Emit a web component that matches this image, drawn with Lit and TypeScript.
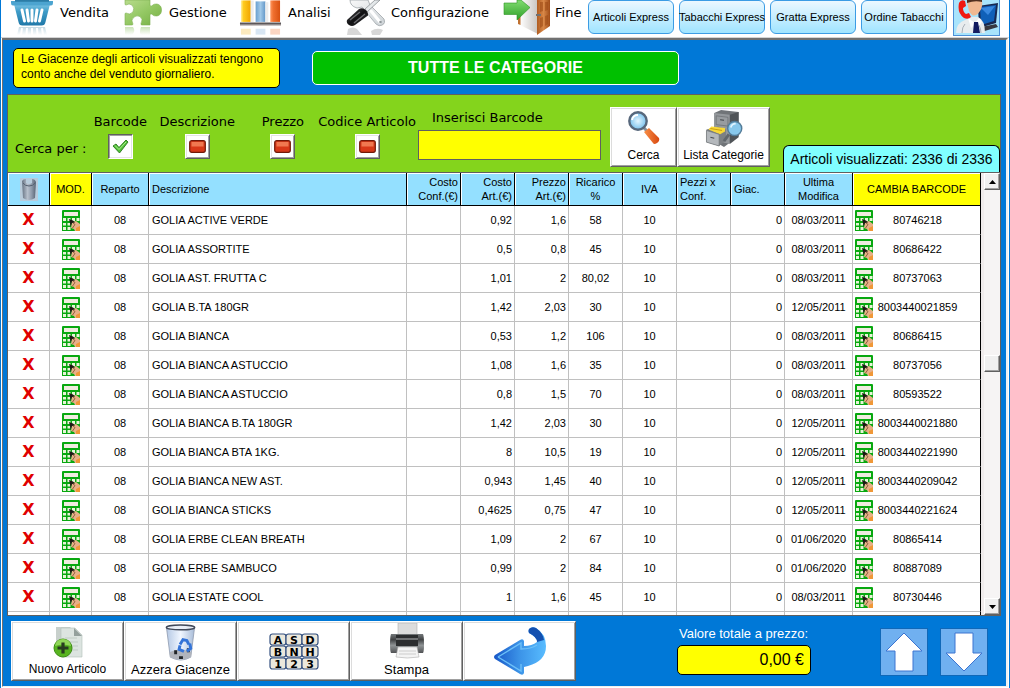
import { LitElement, html, css, svg } from "lit";
import { customElement, state } from "lit/decorators.js";

type Row = [string, string, string, string, string, string, string];

// descrizione, costo art., prezzo art., ricarico, giacenza, ultima modifica, barcode
const ROWS: Row[] = [
  ["GOLIA ACTIVE VERDE", "0,92", "1,6", "58", "0", "08/03/2011", "80746218"],
  ["GOLIA ASSORTITE", "0,5", "0,8", "45", "0", "08/03/2011", "80686422"],
  ["GOLIA AST. FRUTTA C", "1,01", "2", "80,02", "0", "08/03/2011", "80737063"],
  ["GOLIA B.TA 180GR", "1,42", "2,03", "30", "0", "12/05/2011", "8003440021859"],
  ["GOLIA BIANCA", "0,53", "1,2", "106", "0", "08/03/2011", "80686415"],
  ["GOLIA BIANCA ASTUCCIO", "1,08", "1,6", "35", "0", "08/03/2011", "80737056"],
  ["GOLIA BIANCA ASTUCCIO", "0,8", "1,5", "70", "0", "08/03/2011", "80593522"],
  ["GOLIA BIANCA B.TA 180GR", "1,42", "2,03", "30", "0", "12/05/2011", "8003440021880"],
  ["GOLIA BIANCA BTA 1KG.", "8", "10,5", "19", "0", "12/05/2011", "8003440221990"],
  ["GOLIA BIANCA NEW AST.", "0,943", "1,45", "40", "0", "12/05/2011", "8003440209042"],
  ["GOLIA BIANCA STICKS", "0,4625", "0,75", "47", "0", "12/05/2011", "8003440221624"],
  ["GOLIA ERBE CLEAN BREATH", "1,09", "2", "67", "0", "01/06/2020", "80865414"],
  ["GOLIA ERBE SAMBUCO", "0,99", "2", "84", "0", "01/06/2020", "80887089"],
  ["GOLIA ESTATE COOL", "1", "1,6", "45", "0", "08/03/2011", "80730446"],
];

const basket = html`<svg width="44" height="36" viewBox="0 0 44 36" aria-hidden="true">
  <defs>
    <linearGradient id="bk" x1="0" y1="0" x2="0" y2="1"><stop offset="0" stop-color="#7cc4e4"/><stop offset=".35" stop-color="#3f9cc8"/><stop offset="1" stop-color="#1f78a8"/></linearGradient>
    <linearGradient id="bkr" x1="0" y1="0" x2="0" y2="1"><stop offset="0" stop-color="#8ab4c8"/><stop offset="1" stop-color="#fff"/></linearGradient>
  </defs>
  <path d="M4 4h36l-4.500 18q-.6 3.500-4 3.500H12.500q-3.400 0-4-3.500z" fill="url(#bk)"/>
  <path d="M1 1h42v2q0 2.500-2 2.500H3Q1 5.500 1 3z" fill="#4ca4d0"/>
  <path d="M5 0h34v1.800H5z" fill="#2b7ca6"/>
  <path d="M12 10l2.500 11M17 10l1.500 11M22 10v11M27 10l-1.500 11M32 10l-2.500 11" stroke="#fff" stroke-width="3" stroke-linecap="round"/>
  <path d="M9 27h26l2 8H7z" fill="url(#bkr)" opacity=".5"/>
  <path d="M12 28l-1 7M17 28l-.5 7M22 28v7M27 28l.5 7M32 28l1 7" stroke="#fff" stroke-width="2"/>
</svg>`;

const puzzle = html`<svg width="40" height="36" viewBox="0 0 40 36" aria-hidden="true">
  <defs>
    <linearGradient id="pz" x1="0" y1="0" x2="1" y2="1"><stop offset="0" stop-color="#b8dc8c"/><stop offset=".5" stop-color="#94c864"/><stop offset="1" stop-color="#74ae42"/></linearGradient>
    <linearGradient id="pzr" x1="0" y1="0" x2="0" y2="1"><stop offset="0" stop-color="#a8d088"/><stop offset="1" stop-color="#fff"/></linearGradient>
  </defs>
  <path d="M2 0h25v5q0 1.500 1.500 1 2.500-2.500 5.500-2 4.500 1 4.500 6t-4.500 6q-3 .5-5.500-2-1.500-.5-1.500 1v10H19q-1.500 0-1-1.500 2.500-4.500-1-7-3-1.500-6 .5-3.500 3-1.200 6.500.4 1.500-.8 1.500H2V14q0-1 1-1 4 2.500 7-1 2-4-1-7-3-2-6 0-1 0-1-1z" fill="url(#pz)" stroke="#7cb050" stroke-width=".6"/>
  <path d="M2 27h8q3 4-1 8H2zM18 27h9v8h-9q-2-3 0-8z" fill="url(#pzr)" opacity=".6"/>
</svg>`;

const chart = html`<svg width="43" height="36" viewBox="0 0 44 36" aria-hidden="true">
  <defs>
    <linearGradient id="cy"><stop offset="0" stop-color="#fff0a0"/><stop offset=".25" stop-color="#ffcc20"/><stop offset="1" stop-color="#f0a400"/></linearGradient>
    <linearGradient id="cb"><stop offset="0" stop-color="#6aa0d0"/><stop offset=".5" stop-color="#a0c8e8"/><stop offset="1" stop-color="#6498c8"/></linearGradient>
    <linearGradient id="co"><stop offset="0" stop-color="#ff9860"/><stop offset=".3" stop-color="#f07030"/><stop offset="1" stop-color="#d85010"/></linearGradient>
  </defs>
  <path d="M2 0h10v22H2z" fill="url(#cy)"/><path d="M17 1h10v21H17z" fill="url(#cb)"/><path d="M32 0h10v22H32z" fill="url(#co)"/>
  <path d="M12 0h3v22h-3zM27 2h3v20h-3z" fill="#ececec"/>
  <path d="M1 22.500h42v2.500H1z" fill="#5c5658"/><path d="M1 25h42v1H1z" fill="#b8b0b0"/>
  <g opacity=".3"><path d="M2 29h10v6H2z" fill="#f4bc30"/><path d="M17 29h10v6H17z" fill="#80b0d8"/><path d="M32 29h10v6H32z" fill="#f07838"/></g>
</svg>`;

const tools = html`<svg width="39" height="36" viewBox="0 0 39 36" aria-hidden="true">
  <defs>
    <linearGradient id="tl" x1="0" y1="0" x2="1" y2="1"><stop offset="0" stop-color="#f8f8f8"/><stop offset="1" stop-color="#ccd2d6"/></linearGradient>
    <linearGradient id="th" x1="0" y1="0" x2="1" y2="1"><stop offset="0" stop-color="#505052"/><stop offset=".5" stop-color="#101012"/><stop offset="1" stop-color="#38383a"/></linearGradient>
  </defs>
  <path d="M4 0q0 6 7 8l5-1 14 17q3 3 6.500 1t1.500-6L24 5l-2-5z" fill="url(#tl)" stroke="#a0a6aa" stroke-width=".8"/>
  <path d="M25 11l9 11" stroke="#fff" stroke-width="3" stroke-linecap="round"/>
  <circle cx="34.500" cy="22" r="1.300" fill="#90989c"/>
  <path d="M29 0L19 9l2 3L34 0z" fill="#e4e8ea" stroke="#8c9094" stroke-width=".8"/>
  <path d="M13 9q3-1.500 6 .5 3.500 2.500 3 6L9 25q-3 2-6 0t-2-5z" fill="url(#th)"/>
  <path d="M14 12L4 20M19 14L8 23" stroke="#6c6c70" stroke-width="1.300"/>
  <path d="M2 29q5-3 9 0l5 6H1zM25 31q6-4 12-1l-3 5h-8z" fill="#8c8c8c" opacity=".35"/>
</svg>`;

const door = html`<svg width="48" height="36" viewBox="0 0 48 36" aria-hidden="true">
  <defs>
    <linearGradient id="dr"><stop offset="0" stop-color="#b05c20"/><stop offset=".5" stop-color="#d88848"/><stop offset="1" stop-color="#a04c18"/></linearGradient>
    <linearGradient id="da" x1="0" y1="0" x2="0" y2="1"><stop offset="0" stop-color="#80dc70"/><stop offset="1" stop-color="#30a028"/></linearGradient>
    <linearGradient id="dw"><stop offset="0" stop-color="#fff"/><stop offset="1" stop-color="#c8c4c0"/></linearGradient>
  </defs>
  <path d="M17 0h18v34L17 25z" fill="url(#dw)"/><path d="M15 0h2.500v25L15 24z" fill="#c07030"/>
  <path d="M34 0l13 0v26L34 35z" fill="url(#dr)"/>
  <path d="M37 2l3 0v9l-3 1zM42 2l3 0v8l-3 1zM37 18l3-1v9l-3 2zM42 16l3-1v9l-3 2z" fill="#9a4814" opacity=".55"/>
  <path d="M33 14h5v2h-5z" fill="#707070"/>
  <path d="M1 3h13V0h4l9 7.500L14 20v-5.500H1z" fill="url(#da)" stroke="#2c9424" stroke-width=".6"/>
</svg>`;

const support = html`<svg width="45" height="35" viewBox="0 0 45 35" aria-hidden="true">
  <path d="M24 6l20-3-2 20-17 5z" fill="#182850"/><path d="M26 7l16-2-2 16L27 25z" fill="#1060b8"/><path d="M27 8l14-2-7 9z" fill="#3888e0"/>
  <path d="M22 28l20-4 2 3-20 6z" fill="#383840"/>
  <path d="M2 33q0-10 9-13l7-3h6q7 3 7 16z" fill="#e8ecee"/><path d="M8 33q0-6 3-9M27 33q0-4-2-8" stroke="#a8b0b8" fill="none"/>
  <path d="M13 0h15q1 7-2 11-4 6-8 4-4-3-5-15z" fill="#f0b890"/><path d="M13 0h15v2q-7-2-15 1z" fill="#503020"/>
  <path d="M14 18l7 5 4-5 3 4-4 5-3-3-4 4z" fill="#fff"/><path d="M20 22h4l2 11h-7z" fill="#141c60"/>
  <path d="M5 3q2-4 6-2l1 5-3 2q0 4 3 6l3-1 2 4q-3 3-7 1Q3 13 5 3z" fill="#f01810"/>
</svg>`;

const calc = html`<svg class="calc" width="18" height="21" viewBox="0 0 18 21" aria-hidden="true">
  <path d="M0 1q0-1 1-1h16q1 0 1 1v20H0z" fill="#08a810"/>
  <path d="M2 2h14v4H2z" fill="#f0ece0"/>
  <path d="M1 8h3v3H1zM5.500 8h3v3h-3zM10 8h3v3h-3zM14.500 8h3v3h-3zM1 13h3v2.500H1zM5.500 13h3v2.500h-3zM1 17h3v3H1zM5.500 17h3v3h-3z" fill="#e8f4d8"/>
  <path d="M10 12l4-1 4 3v7h-5l-1-2-3-1z" fill="#e8b088"/>
  <path d="M14 18l4-2v5h-4z" fill="#f09838"/>
  <path d="M7 9l4 1.500 2 2-3 .5-1.500 4-.5-4z" fill="#1c1814"/>
  <path d="M11 13l2 1.500-2.500 3.500" stroke="#7a4c30" stroke-width=".8" fill="none"/>
</svg>`;

const bin = html`<svg width="18" height="23" viewBox="0 0 18 23" role="img" aria-label="Elimina">
  <defs><linearGradient id="bn"><stop offset="0" stop-color="#687484"/><stop offset=".4" stop-color="#b8c0cc"/><stop offset=".7" stop-color="#8c98a8"/><stop offset="1" stop-color="#586474"/></linearGradient></defs>
  <path d="M0 0h18v23H0z" fill="#b8ccdc"/>
  <path d="M2 3q1-2 4-2v4q3 2 6 0V1q3 0 4 3l-1 16q-6 4-12 0z" fill="url(#bn)"/>
  <path d="M3 5q2 3 6 3t6-3" fill="none" stroke="#546070" stroke-width="1"/>
</svg>`;

const magnifier = html`<svg width="34" height="35" viewBox="0 0 34 35" aria-hidden="true">
  <defs><radialGradient id="mg"><stop offset="0" stop-color="#e4f6ff"/><stop offset="1" stop-color="#78c0ec"/></radialGradient>
  <linearGradient id="mh"><stop offset="0" stop-color="#f89048"/><stop offset="1" stop-color="#d84810"/></linearGradient></defs>
  <path d="M16 17l5 5" stroke="#889098" stroke-width="3"/>
  <path d="M17 22l5-4 10 10q1 3-2 5t-4 0z" fill="url(#mh)"/>
  <circle cx="11" cy="11" r="8.700" fill="url(#mg)" stroke="#58687c" stroke-width="2.400"/>
  <path d="M5 10q1-5 6-5" stroke="#fff" stroke-width="2" fill="none"/>
</svg>`;

const cabinet = html`<svg width="40" height="37" viewBox="0 0 40 38" aria-hidden="true">
  <path d="M10 3l7-3 18 2v25L20 38l-10-6z" fill="#707478"/><path d="M10 3l16 2v30l-16-4z" fill="#94989c"/><path d="M26 5l9-3v26l-9 7z" fill="#505458"/>
  <path d="M12 6l12 1.500v9L12 15z" fill="#989ca0" stroke="#606468" stroke-width=".6"/><path d="M16 10l4 .5" stroke="#404448" stroke-width="1.200"/>
  <path d="M2 20l12-3 8 3v11l-7 6-13-4z" fill="#7c8084"/><path d="M4 20l3-3 14 1.500V22l-5 3z" fill="#f8d838"/><path d="M6 19l12 2" stroke="#c89c10"/>
  <path d="M2 21l13 4v12L2 33z" fill="#b4b8bc" stroke="#707478" stroke-width=".7"/><path d="M6 28l4 1" stroke="#484c50" stroke-width="1.200"/>
  <path d="M25 25l-5 7" stroke="#60666c" stroke-width="3"/>
  <circle cx="31" cy="19" r="7.200" fill="#88c8ec" stroke="#547c98" stroke-width="1.500"/><path d="M27 18q1-4 5-4" stroke="#e0f4ff" stroke-width="1.800" fill="none"/>
</svg>`;

const newDoc = html`<svg width="30" height="33" viewBox="0 0 30 33" aria-hidden="true">
  <path d="M3 1h14l5 5v20H3z" fill="#c8d0cc"/><path d="M8 2h14l7 7v22H8z" fill="#dce4e0" stroke="#b4c0b8" stroke-width=".6"/><path d="M21 2v8h8z" fill="#94a09c"/>
  <path d="M12 12h12M12 16h13M12 20h13M16 24h9" stroke="#c0ccc4"/>
  <circle cx="10" cy="22" r="9" fill="#58b420" stroke="#3c8c14"/><path d="M2 20q1-7 8-7t8 7q-8-3-16 0z" fill="#a0e068" opacity=".8"/>
  <path d="M10 16.500v11M4.500 22h11" stroke="#283c20" stroke-width="3.200"/>
</svg>`;

const recycle = html`<svg width="34" height="38" viewBox="0 0 34 39" aria-hidden="true">
  <defs><linearGradient id="rc"><stop offset="0" stop-color="#b4c8e4"/><stop offset=".5" stop-color="#f0f6ff"/><stop offset="1" stop-color="#a8bcd8"/></linearGradient></defs>
  <path d="M2 3h29l-4 31q-10 6-21 0z" fill="url(#rc)" stroke="#8c98ac" stroke-width=".8"/>
  <ellipse cx="16.500" cy="3.500" rx="14.500" ry="2.500" fill="#e8eef6" stroke="#404858" stroke-width="1.500"/>
  <path d="M5 29q11-5 23 0l-1 5q-10 5-21 0z" fill="#b0b4bc"/><path d="M10 27h3v4h-3zM23 25h3v4h-3zM15 33h4v3h-4z" fill="#202428"/>
  <path d="M16 21l3-5 4 1 2 4M26 20l1 5-4 3M20 28l-5-2 1-4" stroke="#3474d8" stroke-width="3" fill="none"/>
</svg>`;

const keyboard = html`<svg width="50" height="37" viewBox="0 0 50 37" role="img" aria-label="Tastiera">
  ${["ASD", "BNH", "123"].map((line, r) =>
    [...line].map((k, c) => svg`<rect x=${1 + c * 16} y=${1 + r * 12} width="16" height="11" rx="2.500" fill="#ece8dc" stroke="#345080" stroke-width="1.200"/>
      <text x=${9 + c * 16} y=${10.500 + r * 12} text-anchor="middle" class="key">${k}</text>`)
  )}
</svg>`;

const printer = html`<svg width="36" height="36" viewBox="0 0 36 36" aria-hidden="true">
  <defs><linearGradient id="pr" x1="0" y1="0" x2="0" y2="1"><stop offset="0" stop-color="#74787a"/><stop offset=".3" stop-color="#404244"/><stop offset=".6" stop-color="#909496"/><stop offset="1" stop-color="#505254"/></linearGradient></defs>
  <path d="M9 0h19v13H9z" fill="#dcdcdc" stroke="#b0b0b0" stroke-width=".6"/>
  <path d="M2 11h32q1 2 1 10t-1 9H2q-1-2-1-9t1-10z" fill="url(#pr)"/><path d="M7 12h22v11H7z" fill="#2c2e30"/><path d="M7 16h22" stroke="#707274" stroke-width="2"/>
  <path d="M9 24h19l2 10q-12 2-23 0z" fill="#f4f4f4" stroke="#b0b0b0" stroke-width=".6"/><path d="M10 28h17M10 31h17" stroke="#ccc"/>
</svg>`;

const back = html`<svg width="54" height="50" viewBox="0 0 54 50" role="img" aria-label="Indietro">
  <defs><linearGradient id="ba"><stop offset="0" stop-color="#1858c8"/><stop offset=".5" stop-color="#3c94e8"/><stop offset="1" stop-color="#58bcff"/></linearGradient></defs>
  <path d="M36 3q3-3 7-1 10 6 10 18 0 15-18 20l-4 1v6q-1 3-4 1L2 33q-2-2 0-4l25-15q3-2 4 1v5q8 0 13-4 1-4-8-9-1-2 0-4z" fill="url(#ba)"/>
  <path d="M36 3q3-3 7-1 7 5 8 12l-7 2q0-5-8-9-1-2 0-4z" fill="#1450b0"/>
  <path d="M5 31l23-14v6q10 0 16-4M28 38v7L5 31" fill="none" stroke="#6cc0f8" stroke-width="1.400"/>
</svg>`;

const arrow = (up: boolean) => html`<svg width="40" height="42" viewBox="0 0 40 42" role="img" aria-label=${up ? "Su" : "Giù"}>
  <path d=${up ? "M20 2l18 18h-9v20H11V20H2z" : "M20 40l18-18h-9V2H11v20H2z"} fill="#fff" stroke="#3c74d0" stroke-width="1"/>
</svg>`;

const tick = html`<svg class="mark" width="17" height="15" viewBox="0 0 17 15" aria-hidden="true"><path d="M1 7l3-2 3 3.500L14 1l2 2-8.500 11z" fill="#50c038" stroke="#287818" stroke-width=".9"/><path d="M3 6.500l4 4L14 3" stroke="#b0f090" fill="none"/></svg>`;
const brick = html`<svg class="mark" width="17" height="13" viewBox="0 0 17 13" aria-hidden="true"><rect x=".7" y=".7" width="15.600" height="11.600" rx="2" fill="#d83818" stroke="#701808" stroke-width="1.200"/><path d="M2.500 2h12v4.500h-12z" fill="#f07850"/></svg>`;

@customElement("app-root")
export class AppRoot extends LitElement {
  @state() private mode = 0;

  static styles = css`
    * { box-sizing: border-box; }
    :host {
      display: flex; flex-direction: column; height: 100vh; overflow: hidden;
      font-family: "Liberation Sans", Arial, sans-serif; font-size: 11px; color: #000;
      background: #fff; border: 1px solid #0078d7; border-top: 0;
    }
    svg { display: block; flex: none; }
    button { font: inherit; color: inherit; padding: 0; margin: 0; border: 0; background: none; cursor: pointer; }
    .top { display: flex; height: 38px; flex: none; padding-left: 9px; border-bottom: 1px solid #d4d4d4; }
    .menu { display: grid; grid-template-columns: 113px 116px 107px 157px 85px; }
    .item { display: flex; align-items: flex-start; gap: 6px; text-decoration: none; color: #000; font: 13px/26px "DejaVu Sans", Verdana, sans-serif; white-space: nowrap; }
    .item.tight { gap: 4px; }
    .express { display: flex; gap: 5px; }
    .express button { width: 86px; height: 34px; border: 1px solid #3c9ce4; border-radius: 6px; background: linear-gradient(#ecf8ff, #a0e4ff); white-space: nowrap; display: flex; justify-content: center; align-items: center; }
    .support { width: 47px; height: 36px; margin-left: 6px; border: 1px solid #4c90d8; border-top: 0; background: #a8e4fc; overflow: hidden; }
    .frame { flex: 1; min-height: 0; display: flex; flex-direction: column; background: #0078d7; margin: 0 1px 1px; border: 1px solid #707070; border-width: 2px 0 0 1px; border-right: 2px solid #f0f0f0; border-bottom: 1px solid #f0f0f0; }
    .bar { height: 54px; flex: none; display: flex; gap: 32px; align-items: flex-start; padding: 8px 10px 0; }
    .note { margin: 0; width: 267px; height: 40px; padding: 3px 7px; background: #ff0; border: 1px solid #000; border-radius: 5px; font-size: 12px; line-height: 15px; white-space: nowrap; }
    .title { margin: 3px 0 0; width: 367px; height: 34px; border: 1px solid #fff; border-radius: 5px; background: #00c000; color: #fff; font-size: 16px; line-height: 32px; font-weight: bold; text-align: center; }
    .panel { flex: 1; min-height: 0; display: flex; flex-direction: column; margin: 0 5px 0 4px; border: 1px solid #606060; background: #84d41c; }
    .search { height: 77px; flex: none; display: flex; align-items: flex-start; padding-left: 7px; font: 13px/18px "DejaVu Sans", Verdana, sans-serif; }
    .by { width: 78px; padding-top: 45px; white-space: nowrap; }
    .modes { display: grid; grid-template-columns: 54px 76px 57px 100px; column-gap: 12px; justify-items: end; padding-top: 18px; margin: 0; border: 0; }
    .mode { display: flex; flex-direction: column; align-items: center; gap: 3px; white-space: nowrap; }
    .tick { display: grid; place-items: center; }
    .tick > * { grid-area: 1 / 1; }
    .tick input { appearance: none; margin: 0; width: 25px; height: 25px; background: #fff; border: 1px solid; border-color: #fff #606060 #606060 #fff; box-shadow: inset 1px 1px #e4e4e4, inset -1px -1px #a0a0a0; }
    .tick input:checked { border-color: #606060 #fff #fff #606060; box-shadow: inset 1px 1px #a0a0a0, inset -1px -1px #e4e4e4; }
    .mark { pointer-events: none; }
    .code { display: flex; flex-direction: column; gap: 3px; padding: 14px 9px 0 2px; }
    .code label { padding-left: 14px; }
    .code input { width: 183px; height: 30px; border: 1px solid #606060; background: #ff0; padding: 0 4px; font: inherit; border-radius: 0; }
    .raised { background: #fff; border: 1px solid; border-color: #fff #606060 #606060 #fff; box-shadow: inset 1px 1px #dcdcdc, inset -1px -1px #a0a0a0; display: flex; flex-direction: column; align-items: center; justify-content: flex-end; font: 12px/15px "Liberation Sans", Arial, sans-serif; white-space: nowrap; }
    .search .raised { height: 60px; margin-top: 12px; padding-bottom: 3px; gap: 3px; }
    .search .list { gap: 1px; }
    .find { width: 67px; }
    .list { width: 93px; }
    .count { margin: 50px 0 0 auto; width: 217px; height: 27px; border: 1px solid #000; border-bottom: 0; border-radius: 6px 6px 0 0; background: #80ffff; font: 14px/26px "Liberation Sans", Arial, sans-serif; text-align: center; white-space: nowrap; }
    .data { flex: 1; min-height: 0; display: flex; background: #fff; border-top: 1px solid #606060; }
    .view { flex: 1; min-width: 0; overflow: hidden; }
    table { width: 100%; border-collapse: separate; border-spacing: 0; table-layout: fixed; }
    .c42 { width: 42px; } .c54 { width: 54px; } .c57 { width: 57px; } .c68 { width: 68px; } .c128 { width: 128px; }
    th { height: 33px; padding: 0 2px; background: #94e0ff; font-weight: normal; line-height: 14px; text-align: center; border: 1px solid #000; border-width: 0 1px 1px 0; box-shadow: inset 1px 1px #fff; }
    th svg { margin: 0 auto; }
    td { height: 29px; padding: 0 2px; border: 1px solid #c0c0c0; border-width: 0 1px 1px 0; text-align: center; white-space: nowrap; line-height: 14px; overflow: hidden; }
    td:last-child { border-right-color: #000; }
    .hot { background: #ff0; }
    .left { text-align: left; padding-left: 3px; }
    .right { text-align: right; }
    .calc { margin: 0 auto; }
    .del { display: block; width: 100%; color: #e00000; font: bold 16px/20px "DejaVu Sans", Verdana, sans-serif; }
    .change { display: flex; align-items: center; width: 100%; padding-right: 16px; }
    .change .calc { margin: 0; }
    .change span { flex: 1; }
    .edit { display: block; width: 100%; }
    .scroll { flex: none; width: 19px; border-left: 3px solid #f0ecec; background: #f6f4f4; display: flex; flex-direction: column; }
    .scroll button { flex: none; height: 17px; background: #f0f0f0; border: 1px solid; border-color: #fff #606060 #606060 #fff; box-shadow: inset -1px -1px #a0a0a0; display: grid; place-items: center; }
    .before { flex: 165; }
    .after { flex: 226; }
    .foot { height: 70px; flex: none; display: flex; align-items: flex-start; padding: 5px 18px 0 8px; }
    .cmds { display: flex; }
    .cmds .raised { width: 113px; height: 60px; padding-bottom: 3px; gap: 3px; }
    .cmds .wide { font-size: 13px; }
    .cmds .bin { gap: 0; }
    .cmds .solo { justify-content: center; padding: 0; }
    .key { font: bold 11px "DejaVu Sans", sans-serif; }
    .total { display: flex; flex-direction: column; gap: 3px; margin-left: 101px; padding-top: 5px; width: 134px; font-size: 13px; line-height: 16px; color: #fff; white-space: nowrap; }
    .total label { padding-left: 2px; }
    .total input { width: 134px; height: 30px; background: #ff0; border: 1px solid #000; border-radius: 5px; padding: 0 6px; text-align: right; font: 16px "Liberation Sans", Arial, sans-serif; color: #000; }
    .moves { display: flex; gap: 12px; margin: 7px 0 0 auto; }
    .moves button { width: 48px; height: 48px; background: #70b0f0; border: 1px solid #1068b8; display: grid; place-items: center; }
  `;

  render() {
    const modes = ["Barcode", "Descrizione", "Prezzo", "Codice Articolo"];
    return html`
      <header class="top">
        <nav class="menu">
          <a class="item" href="#vendita">${basket}<span>Vendita</span></a>
          <a class="item" href="#gestione">${puzzle}<span>Gestione</span></a>
          <a class="item" href="#analisi">${chart}<span>Analisi</span></a>
          <a class="item" href="#configurazione">${tools}<span>Configurazione</span></a>
          <a class="item tight" href="#fine">${door}<span>Fine</span></a>
        </nav>
        <div class="express">
          ${["Articoli Express", "Tabacchi Express", "Gratta Express", "Ordine Tabacchi"].map((t) => html`<button>${t}</button>`)}
        </div>
        <button class="support" aria-label="Assistenza">${support}</button>
      </header>
      <main class="frame">
        <div class="bar">
          <p class="note">Le Giacenze degli articoli visualizzati tengono<br />conto anche del venduto giornaliero.</p>
          <h1 class="title">TUTTE LE CATEGORIE</h1>
        </div>
        <section class="panel">
          <form class="search" @submit=${(e: Event) => e.preventDefault()}>
            <span class="by">Cerca per :</span>
            <div class="modes">
              ${modes.map((m, i) => html`<div class="mode">
                <label for="m${i}">${m}</label>
                <span class="tick">
                  <input id="m${i}" type="checkbox" .checked=${this.mode === i} @change=${() => (this.mode = i)} />
                  ${this.mode === i ? tick : brick}
                </span>
              </div>`)}
            </div>
            <div class="code"><label for="code">Inserisci Barcode</label><input id="code" type="text" /></div>
            <button class="raised find" type="submit">${magnifier}Cerca</button>
            <button class="raised list" type="button">${cabinet}Lista Categorie</button>
            <output class="count">Articoli visualizzati: 2336 di 2336</output>
          </form>
          <div class="data">
            <div class="view">
              <table>
                <colgroup>
                  <col class="c42" /><col class="c42" /><col class="c57" /><col />
                  ${[1, 2, 3, 4, 5, 6, 7].map(() => html`<col class="c54" />`)}
                  <col class="c68" /><col class="c128" />
                </colgroup>
                <thead>
                  <tr>
                    <th>${bin}</th><th class="hot">MOD.</th><th>Reparto</th><th class="left">Descrizione</th>
                    <th class="right">Costo<br />Conf.(€)</th><th class="right">Costo<br />Art.(€)</th><th class="right">Prezzo<br />Art.(€)</th>
                    <th>Ricarico<br />%</th><th>IVA</th><th class="left">Pezzi x<br />Conf.</th><th class="left">Giac.</th>
                    <th>Ultima<br />Modifica</th><th class="hot">CAMBIA BARCODE</th>
                  </tr>
                </thead>
                <tbody>
                  ${ROWS.map(([name, cost, price, markup, stock, date, code]) => html`<tr>
                    <td><button class="del" aria-label="Elimina ${name}">X</button></td>
                    <td><button class="edit" aria-label="Modifica ${name}">${calc}</button></td>
                    <td>08</td><td class="left">${name}</td><td></td>
                    <td class="right">${cost}</td><td class="right">${price}</td><td>${markup}</td><td>10</td><td></td>
                    <td class="right">${stock}</td><td>${date}</td>
                    <td><button class="change">${calc}<span>${code}</span></button></td>
                  </tr>`)}
                  <tr>${Array.from({ length: 13 }, () => html`<td></td>`)}</tr>
                </tbody>
              </table>
            </div>
            <div class="scroll">
              <button aria-label="Scorri su"><svg width="7" height="4" viewBox="0 0 7 4"><path d="M3.500 0L7 4H0z"/></svg></button>
              <span class="before"></span>
              <button aria-label="Posizione"></button>
              <span class="after"></span>
              <button aria-label="Scorri giù"><svg width="7" height="4" viewBox="0 0 7 4"><path d="M3.500 4L7 0H0z"/></svg></button>
            </div>
          </div>
        </section>
        <footer class="foot">
          <div class="cmds">
            <button class="raised">${newDoc}Nuovo Articolo</button>
            <button class="raised wide bin">${recycle}Azzera Giacenze</button>
            <button class="raised solo">${keyboard}</button>
            <button class="raised wide">${printer}Stampa</button>
            <button class="raised solo">${back}</button>
          </div>
          <div class="total"><label for="total">Valore totale a prezzo:</label><input id="total" type="text" readonly value="0,00 €" /></div>
          <div class="moves"><button>${arrow(true)}</button><button>${arrow(false)}</button></div>
        </footer>
      </main>
    `;
  }
}
